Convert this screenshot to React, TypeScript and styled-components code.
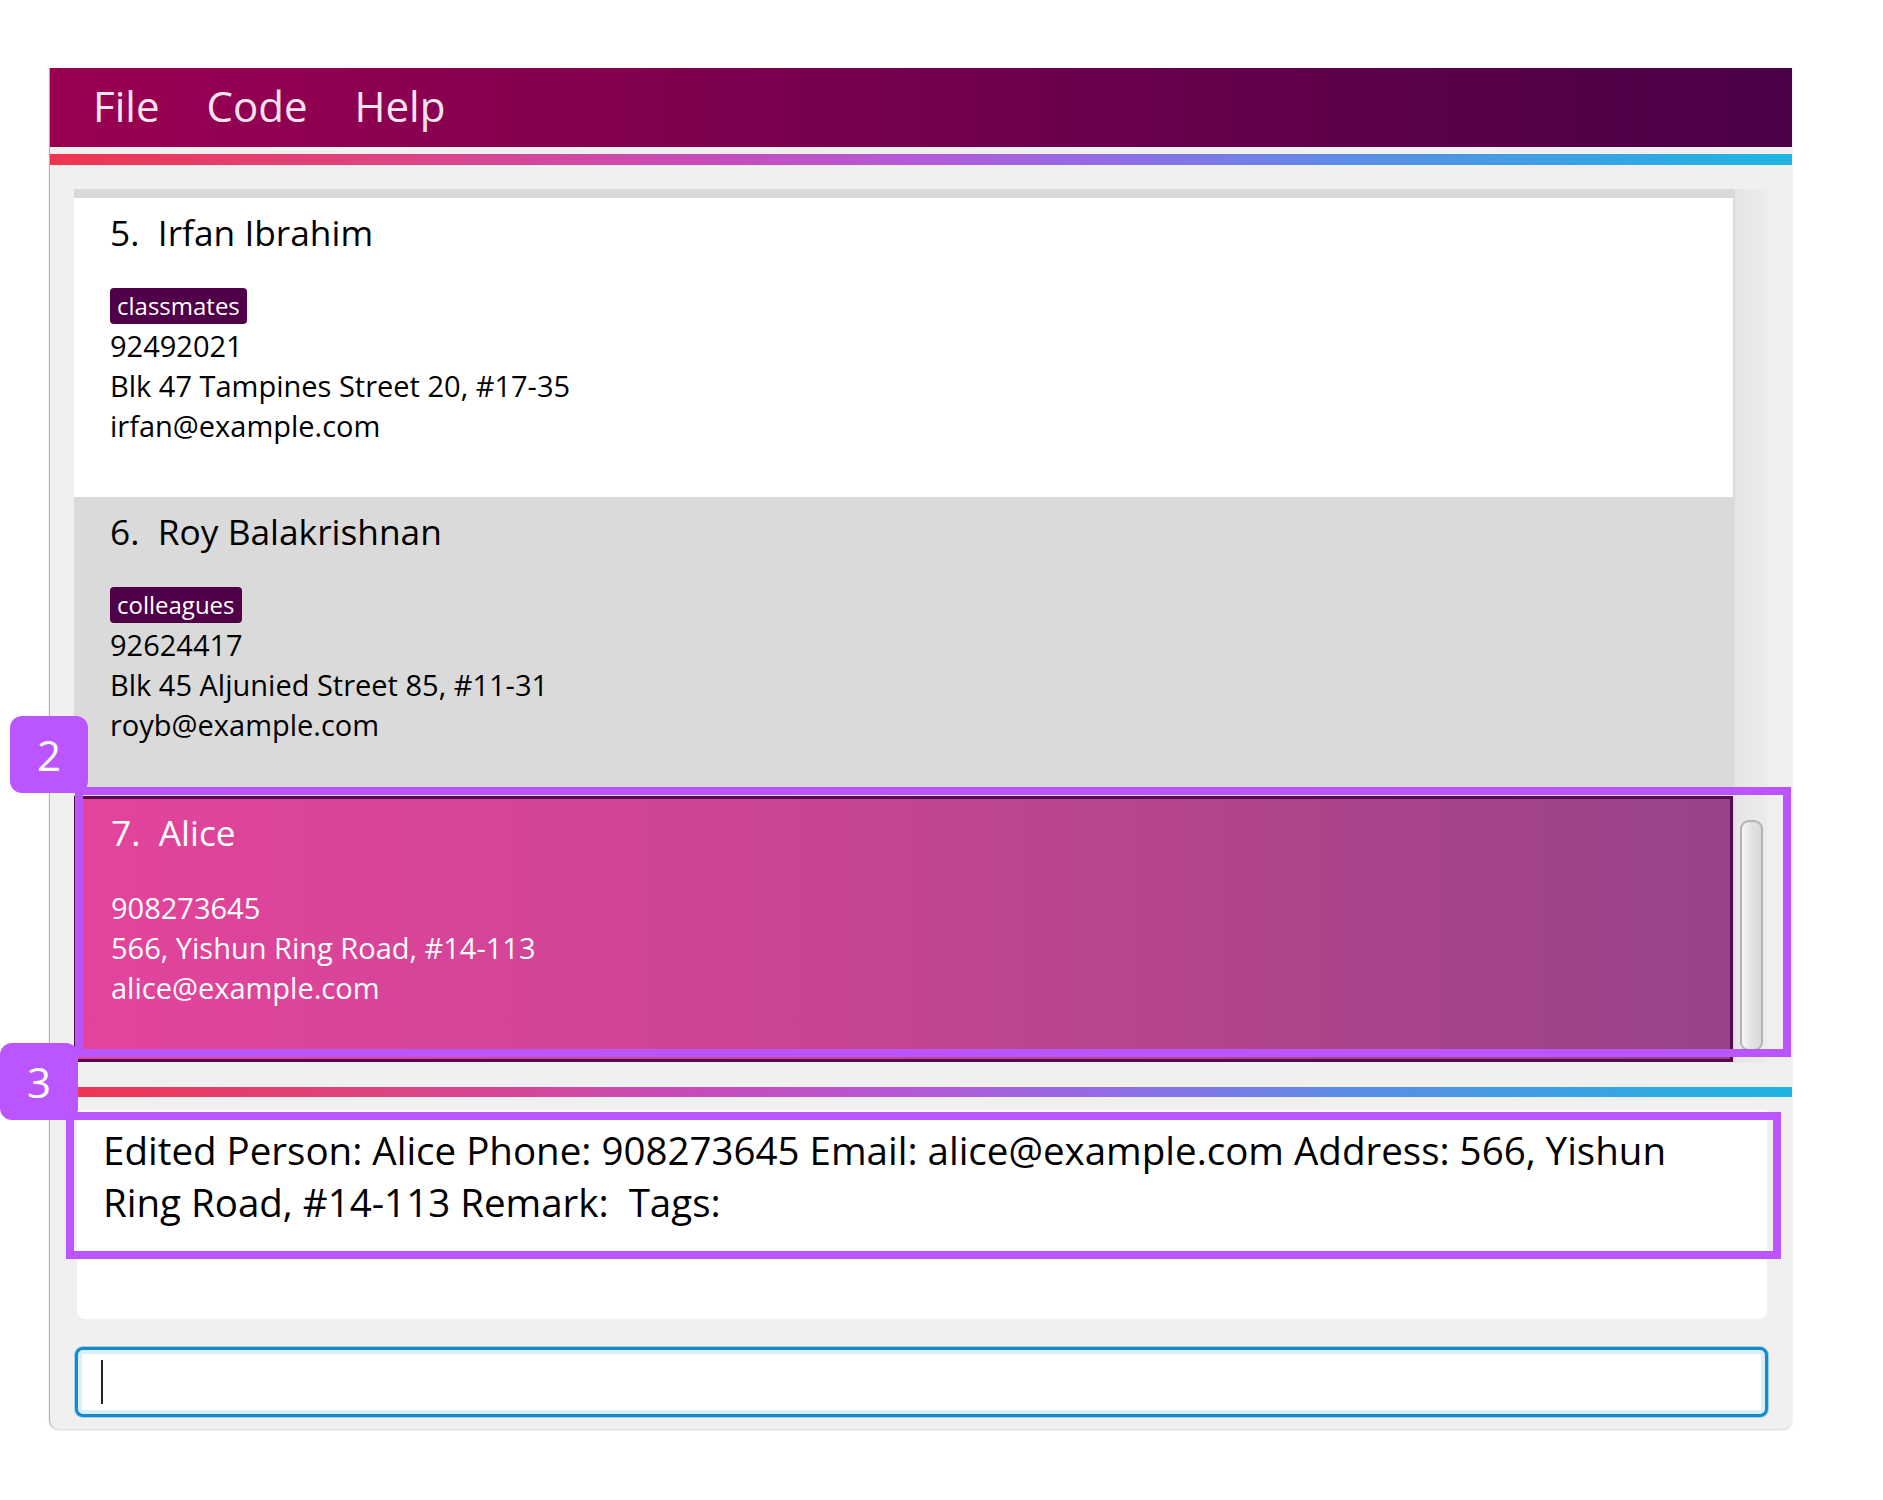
import React from "react";
import styled, { createGlobalStyle } from "styled-components";

const GlobalStyle = createGlobalStyle`
  html, body { margin: 0; padding: 0; background: #ffffff; }
  body { font-family: "Open Sans", "Noto Sans", sans-serif; }
  * { box-sizing: border-box; }
`;

const Stage = styled.div`
  position: relative;
  width: 1883px;
  height: 1500px;
  padding: 68px 0 0 49px;
`;

const Window = styled.div`
  width: 1743px;
  height: 1361px;
  background: #f0f0f1;
  display: flex;
  flex-direction: column;
  border-left: 1px solid #b4b4b4;
  border-bottom-left-radius: 9px;
  border-bottom-right-radius: 9px;
  box-shadow: 0 1px 2px rgba(0, 0, 0, 0.18);
`;

const MenuBar = styled.div`
  height: 79px;
  flex: none;
  display: flex;
  align-items: center;
  gap: 47px;
  padding-left: 43px;
  background: linear-gradient(90deg, #9a0052 0%, #80004f 35%, #6a004d 60%, #4a0047 100%);
`;

const MenuItem = styled.span`
  font-size: 42px;
  color: #f5e3ee;
  line-height: 1;
  padding-bottom: 4px;
`;

const Rule = styled.div<{ $top: number; $h: number }>`
  flex: none;
  margin-top: ${(p) => p.$top}px;
  height: ${(p) => p.$h}px;
  background: linear-gradient(
    90deg,
    #f03550 0%,
    #dc4584 20%,
    #c64cbc 38%,
    #b45ad8 50%,
    #8e6ee8 62%,
    #5a8ee6 75%,
    #1db5e2 100%
  );
`;

const ListArea = styled.div`
  flex: none;
  padding: 24px 25px 0 24px;
`;

const ListViewport = styled.div`
  height: 874px;
  display: grid;
  grid-template-columns: 1fr 34px;
  overflow: hidden;
`;

const Cards = styled.div`
  display: flex;
  flex-direction: column;
  overflow: hidden;
`;

const CardStub = styled.div`
  flex: none;
  height: 9px;
  background: #d8d9d8;
`;

const Card = styled.div<{ $variant: "white" | "gray" | "selected" }>`
  flex: none;
  display: flex;
  flex-direction: column;
  padding: ${(p) => (p.$variant === "selected" ? "11px 33px 0 34px" : "12px 36px 0 36px")};
  height: ${(p) => (p.$variant === "selected" ? 266 : 299)}px;
  color: ${(p) => (p.$variant === "selected" ? "#ffffff" : "#000000")};
  background: ${(p) =>
    p.$variant === "selected"
      ? "linear-gradient(90deg, #e3449b 0%, #cc4595 40%, #ac448b 75%, #98428a 100%)"
      : p.$variant === "gray"
      ? "#d9dad9"
      : "#ffffff"};
  border: ${(p) => (p.$variant === "selected" ? "3px solid #560c4c" : "none")};
`;

const Name = styled.div`
  font-size: 35.3px;
  line-height: 44px;
  height: 44px;
  white-space: pre;
`;

const Tags = styled.div`
  display: flex;
  gap: 8px;
  margin-top: 34px;
  margin-bottom: 2px;
`;

const Tag = styled.span`
  display: inline-flex;
  align-items: center;
  height: 36px;
  padding: 0 7px;
  border-radius: 4px;
  background: #4f0048;
  color: #ffffff;
  font-size: 24px;
  line-height: 1;
`;

const Field = styled.div<{ $first?: boolean }>`
  font-size: 29px;
  line-height: 40px;
  height: 40px;
  white-space: nowrap;
  margin-top: ${(p) => (p.$first ? 34 : 0)}px;
`;

const ScrollTrack = styled.div`
  display: flex;
  flex-direction: column;
  padding: 631px 0 0 7px;
  background: linear-gradient(90deg, #d6d6d6 0px, #e6e6e6 3px, #ececec 100%);
`;

const ScrollThumb = styled.div`
  width: 23px;
  height: 231px;
  border: 2px solid #b3b3b3;
  border-radius: 9px;
  background: linear-gradient(90deg, #f6f6f6 0%, #e3e3e3 50%, #dadada 100%);
`;

const ResultArea = styled.div`
  flex: none;
  margin: 13px 25px 0 27px;
  height: 209px;
  background: #ffffff;
  border-bottom-left-radius: 8px;
  border-bottom-right-radius: 8px;
  padding: 14px 40px 0 26px;
  font-size: 38.5px;
  line-height: 52px;
  color: #000000;
`;

const CommandBox = styled.div`
  flex: none;
  margin: 28px 24px 0 25px;
  height: 70px;
  border: 3px solid #1689c9;
  border-radius: 8px;
  background: #ffffff;
  box-shadow: 0 0 0 1px #9fd0ea, inset 0 0 0 4px #d9eef8;
  display: flex;
  align-items: center;
  padding-left: 23px;
`;

const Caret = styled.div`
  width: 2px;
  height: 44px;
  background: #222222;
`;

const Highlight = styled.div<{ $x: number; $y: number; $w: number; $h: number }>`
  position: absolute;
  left: ${(p) => p.$x}px;
  top: ${(p) => p.$y}px;
  width: ${(p) => p.$w}px;
  height: ${(p) => p.$h}px;
  border: 8px solid #bb55ff;
  pointer-events: none;
`;

const Badge = styled.div<{ $x: number; $y: number }>`
  position: absolute;
  left: ${(p) => p.$x}px;
  top: ${(p) => p.$y}px;
  width: 78px;
  height: 77px;
  border-radius: 12px;
  background: #bb55ff;
  color: #ffffff;
  font-size: 42px;
  display: flex;
  align-items: center;
  justify-content: center;
  line-height: 1;
`;

type Person = {
  idx: number;
  name: string;
  tags: string[];
  phone: string;
  address: string;
  email: string;
  variant: "white" | "gray" | "selected";
};

const people: Person[] = [
  {
    idx: 5,
    name: "Irfan Ibrahim",
    tags: ["classmates"],
    phone: "92492021",
    address: "Blk 47 Tampines Street 20, #17-35",
    email: "irfan@example.com",
    variant: "white",
  },
  {
    idx: 6,
    name: "Roy Balakrishnan",
    tags: ["colleagues"],
    phone: "92624417",
    address: "Blk 45 Aljunied Street 85, #11-31",
    email: "royb@example.com",
    variant: "gray",
  },
  {
    idx: 7,
    name: "Alice",
    tags: [],
    phone: "908273645",
    address: "566, Yishun Ring Road, #14-113",
    email: "alice@example.com",
    variant: "selected",
  },
];

function PersonCard({ p }: { p: Person }) {
  const hasTags = p.tags.length > 0;
  return (
    <Card $variant={p.variant}>
      <Name>{`${p.idx}.  ${p.name}`}</Name>
      {hasTags && (
        <Tags>
          {p.tags.map((t) => (
            <Tag key={t}>{t}</Tag>
          ))}
        </Tags>
      )}
      <Field $first={!hasTags}>{p.phone}</Field>
      <Field>{p.address}</Field>
      <Field>{p.email}</Field>
    </Card>
  );
}

export default function App() {
  return (
    <>
      <GlobalStyle />
      <Stage>
        <Window>
          <MenuBar>
            <MenuItem>File</MenuItem>
            <MenuItem>Code</MenuItem>
            <MenuItem>Help</MenuItem>
          </MenuBar>
          <Rule $top={7} $h={11} />
          <ListArea>
            <ListViewport>
              <Cards>
                <CardStub />
                {people.map((p) => (
                  <PersonCard key={p.idx} p={p} />
                ))}
              </Cards>
              <ScrollTrack>
                <ScrollThumb />
              </ScrollTrack>
            </ListViewport>
          </ListArea>
          <Rule $top={24} $h={10} />
          <ResultArea>
            Edited Person: Alice Phone: 908273645 Email: alice@example.com Address: 566, Yishun Ring
            Road, #14-113 Remark:&nbsp; Tags:
          </ResultArea>
          <CommandBox>
            <Caret />
          </CommandBox>
        </Window>
        <Highlight $x={75} $y={787} $w={1716} $h={270} />
        <Highlight $x={66} $y={1112} $w={1715} $h={147} />
        <Badge $x={10} $y={716}>2</Badge>
        <Badge $x={0} $y={1043}>3</Badge>
      </Stage>
    </>
  );
}
